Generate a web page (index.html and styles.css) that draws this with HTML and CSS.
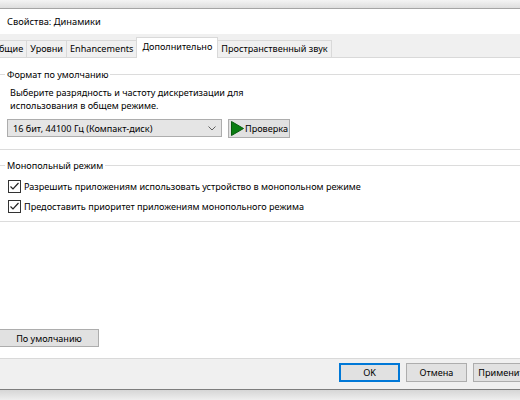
FILE: index.html
```html
<!DOCTYPE html>
<html lang="ru">
<head>
<meta charset="utf-8">
<title>Свойства: Динамики</title>
<link rel="stylesheet" href="styles.css">
</head>
<body>
<div class="window">
  <div class="frame-top"></div>
  <div class="titlebar">Свойства: Динамики</div>
  <div class="dialog">
    <div class="tabs">
      <div class="tab">Общие</div>
      <div class="tab">Уровни</div>
      <div class="tab">Enhancements</div>
      <div class="tab active">Дополнительно</div>
      <div class="tab">Пространственный звук</div>
    </div>
    <div class="page">
      <div class="group group-format">
        <div class="group-title">Формат по умолчанию</div>
        <p class="desc">Выберите разрядность и частоту дискретизации для<br>использования в общем режиме.</p>
        <div class="format-row">
          <div class="combo">
            <span>16 бит, 44100 Гц (Компакт-диск)</span>
            <svg class="chevron" width="8" height="5" viewBox="0 0 8 5"><polyline points="0.5,0.5 4,4 7.5,0.5" fill="none" stroke="#606060" stroke-width="1"/></svg>
          </div>
          <div class="btn btn-test">
            <svg class="play" width="13" height="15" viewBox="0 0 13 15"><polygon points="0.5,0.5 12.5,7.5 0.5,14.5" fill="#0a7d12" stroke="#07590c" stroke-width="1"/></svg>
            <span>Проверка</span>
          </div>
        </div>
      </div>
      <div class="group group-exclusive">
        <div class="group-title">Монопольный режим</div>
        <label class="check-row">
          <svg class="check" width="13" height="13" viewBox="0 0 13 13"><rect x="0.5" y="0.5" width="12" height="12" fill="#fff" stroke="#333"/><polyline points="2.5,6.5 5,9 10.5,3" fill="none" stroke="#222" stroke-width="1.2"/></svg>
          <span>Разрешить приложениям использовать устройство в монопольном режиме</span>
        </label>
        <label class="check-row">
          <svg class="check" width="13" height="13" viewBox="0 0 13 13"><rect x="0.5" y="0.5" width="12" height="12" fill="#fff" stroke="#333"/><polyline points="2.5,6.5 5,9 10.5,3" fill="none" stroke="#222" stroke-width="1.2"/></svg>
          <span>Предоставить приоритет приложениям монопольного режима</span>
        </label>
      </div>
      <div class="btn btn-default">По умолчанию</div>
    </div>
    <div class="buttons">
      <div class="btn btn-ok">OK</div>
      <div class="btn">Отмена</div>
      <div class="btn">Применить</div>
    </div>
  </div>
  <div class="frame-bottom"></div>
</div>
</body>
</html>
```
FILE: styles.css
```css
* { box-sizing: border-box; }
html, body { margin: 0; padding: 0; }
body {
  width: 520px;
  height: 400px;
  overflow: hidden;
  background: #f0f0f0;
  font-family: "Noto Sans", "Open Sans", sans-serif;
  font-size: 9.1px;
  color: #000;
}
.window {
  display: flex;
  flex-direction: column;
  height: 400px;
}
.frame-top {
  height: 9px;
  flex: none;
  background: linear-gradient(#f4f4f4, #dedede);
  border-bottom: 1px solid #a5a5a5;
}
.titlebar {
  height: 25px;
  flex: none;
  background: #fff;
  display: flex;
  align-items: center;
  padding-left: 7px;
  font-size: 9.3px;
}
.dialog {
  flex: 1;
  display: flex;
  flex-direction: column;
  background: #f0f0f0;
}
.tabs {
  height: 24px;
  flex: none;
  display: flex;
  align-items: flex-end;
  border-bottom: 1px solid #d9d9d9;
  margin-left: -12px;
}
.tab {
  height: 17px;
  line-height: 15px;
  padding: 0 3px;
  border: 1px solid #d9d9d9;
  border-bottom: none;
  margin-right: -1px;
  background: #f0f0f0;
  white-space: nowrap;
}
.tab.active {
  height: 21px;
  line-height: 17px;
  padding: 0 5px;
  margin-bottom: -1px;
  background: #fff;
  position: relative;
  z-index: 1;
}
.page {
  flex: 1;
  display: flex;
  flex-direction: column;
  background: #fff;
  border-bottom: 1px solid #d9d9d9;
}
.group {
  margin: 0 -10px;
  border: 1px solid #dcdcdc;
  padding: 0 0 0 17px;
}
.group-format {
  margin-top: 16px;
  padding-bottom: 11px;
}
.group-exclusive {
  margin-top: 15px;
  padding-bottom: 5px;
}
.group-title {
  width: max-content;
  margin: -8px 0 0 -3px;
  padding: 0 2px;
  line-height: 15px;
  background: #fff;
}
.desc {
  margin: 4px 0 0 2px;
  line-height: 13px;
}
.format-row {
  display: flex;
  align-items: flex-start;
  gap: 6px;
  margin: 7px 0 0 -1px;
}
.combo {
  width: 215px;
  height: 18px;
  display: flex;
  align-items: center;
  justify-content: space-between;
  padding: 0 5px 0 5px;
  background: #e5e5e5;
  border: 1px solid #adadad;
}
.chevron { flex: none; margin-top: 1px; }
.btn {
  height: 19px;
  display: flex;
  align-items: center;
  justify-content: center;
  background: #e1e1e1;
  border: 1px solid #adadad;
  white-space: nowrap;
}
.btn-test {
  width: 62px;
  justify-content: flex-start;
  padding-left: 2px;
  gap: 1px;
}
.play { flex: none; }
.check-row {
  display: flex;
  align-items: center;
  height: 20px;
  gap: 3px;
}
.group-title + .check-row { margin-top: 3px; }
.check { flex: none; }
.btn-default {
  width: 100px;
  height: 18px;
  margin: auto 0 11px -1px;
}
.buttons {
  height: 30px;
  flex: none;
  display: flex;
  justify-content: flex-end;
  align-items: flex-start;
  gap: 6px;
  padding-top: 4px;
  margin-right: -14px;
}
.buttons .btn { width: 61px; }
.btn-ok {
  border-color: #0078d7;
  box-shadow: inset 0 0 0 1px #0078d7;
}
.frame-bottom {
  height: 11px;
  flex: none;
  border-top: 1px solid #7d7d7d;
  background: linear-gradient(#d6d6d6, #eeeeee);
}
```
